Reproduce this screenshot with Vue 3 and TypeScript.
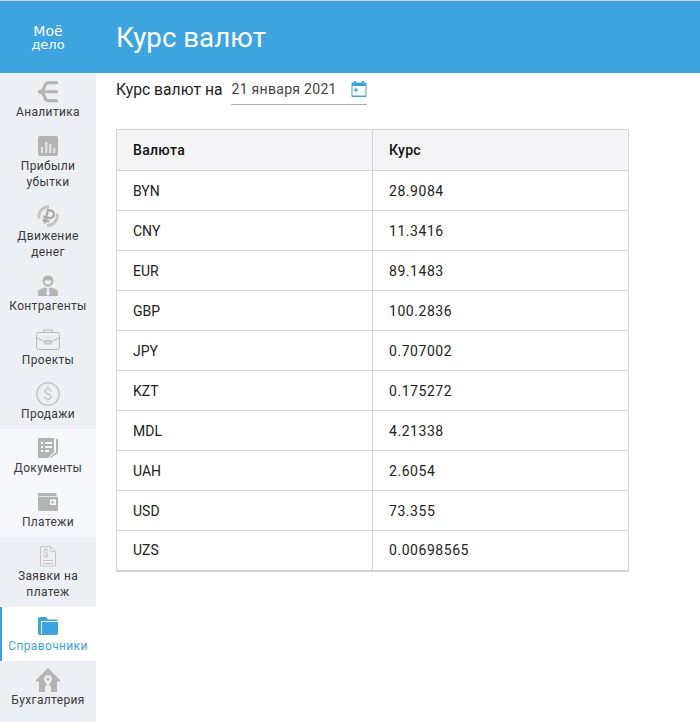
<script setup lang="ts">
interface Nav { id: string; lines: string[]; tone?: string }
const nav: Nav[] = [
  { id: 'analytics', lines: ['Аналитика'] },
  { id: 'profit', lines: ['Прибыли', 'убытки'] },
  { id: 'money', lines: ['Движение', 'денег'] },
  { id: 'agents', lines: ['Контрагенты'] },
  { id: 'projects', lines: ['Проекты'] },
  { id: 'sales', lines: ['Продажи'] },
  { id: 'docs', lines: ['Документы'], tone: 'light' },
  { id: 'pays', lines: ['Платежи'], tone: 'light' },
  { id: 'requests', lines: ['Заявки на', 'платеж'] },
  { id: 'refs', lines: ['Справочники'], tone: 'active' },
  { id: 'accounting', lines: ['Бухгалтерия'] },
]
const rates: [string, string][] = [
  ['BYN', '28.9084'], ['CNY', '11.3416'], ['EUR', '89.1483'], ['GBP', '100.2836'],
  ['JPY', '0.707002'], ['KZT', '0.175272'], ['MDL', '4.21338'], ['UAH', '2.6054'],
  ['USD', '73.355'], ['UZS', '0.00698565'],
]
</script>

<template>
  <div class="page">
    <header class="top">
      <div class="logo"><span class="logo-a">Моё</span><span class="logo-b">дело</span></div>
      <h1 class="title">Курс валют</h1>
    </header>
    <div class="body">
      <nav class="side">
        <a v-for="n in nav" :key="n.id" class="item" :class="n.tone">
          <svg class="ico" width="32" height="24" viewBox="0 0 32 24">
            <g v-if="n.id === 'analytics'" fill="none" stroke="#b3b3b3" stroke-width="3" stroke-linecap="round">
              <path d="M24.500 2.700H17Q13.500 2.700 12.500 6.500Q11.500 11 7.500 11.700" />
              <path d="M24.500 20.700H17Q13.500 20.700 12.500 17Q11.500 12.500 7.500 11.700" />
              <path d="M7.500 11.700H24.500" />
            </g>
            <g v-else-if="n.id === 'profit'">
              <rect x="6" y="2" width="20" height="20" rx="2" fill="#b3b3b3" />
              <path d="M9 13h2v6H9zM13.300 8h2v11h-2zM17.300 10h2v9h-2zM21.300 14h2v5h-2z" fill="#e4e6e8" />
            </g>
            <g v-else-if="n.id === 'money'">
              <path d="M7.200 14.500A9.500 9.500 0 0 1 17 2.700M25 9.500A9.500 9.500 0 0 1 15 21.300" fill="none" stroke="#c4c4c4" stroke-width="3" />
              <g transform="rotate(14 16 12)" fill="none" stroke="#a8a8a8" stroke-width="2.300">
                <path d="M14.500 20V6h3a3.800 3.800 0 0 1 0 7.600h-6M11.500 17h7" />
              </g>
            </g>
            <g v-else-if="n.id === 'agents'">
              <circle cx="16" cy="7" r="4.500" fill="none" stroke="#b3b3b3" stroke-width="2" />
              <path d="M11.500 6.500a4.500 4.500 0 0 1 9 0z" fill="#b3b3b3" />
              <path d="M6 22v-3.500c0-3 3-4.200 7.500-5l2.500 1.500 2.500-1.500c4.500.8 7.500 2 7.500 5V22z" fill="#b3b3b3" />
              <path d="M15 14.500h2l.7 5.500-1.700 2-1.700-2z" fill="#eceff3" />
            </g>
            <g v-else-if="n.id === 'projects'" fill="none" stroke="#b8b8b8" stroke-width="1">
              <rect x="4.500" y="4.500" width="23" height="17" rx="2.500" />
              <path d="M11.500 4.500V2h9v2.500M4.500 9.500l8.500 4.500h6l8.500-4.500M13 12.500h6v3.500h-6z" />
            </g>
            <g v-else-if="n.id === 'sales'">
              <circle cx="16" cy="12" r="11.200" fill="none" stroke="#c6c6c6" stroke-width="1.500" />
              <text x="16" y="18" text-anchor="middle" class="dollar">$</text>
            </g>
            <g v-else-if="n.id === 'docs'">
              <path d="M6 2h16v14l-6 6H6z" fill="#b3b3b3" />
              <path d="M9 6h2v2H9zM13 6h7v2h-7zM9 10h2v2H9zM13 10h7v2h-7zM9 14h2v2H9zM13 14h4v2h-4z" fill="#f5f7fa" />
              <path d="M24 3h2v14l-7 5-1-.8 6-5z" fill="#b3b3b3" />
            </g>
            <g v-else-if="n.id === 'pays'">
              <path d="M8 3h16.500v3H6.500A1.500 1.500 0 0 1 8 3z" fill="#b3b3b3" />
              <path d="M6 5q0 1.800 2 1.800h18V21H8a2 2 0 0 1-2-2z" fill="#b3b3b3" />
              <path d="M18 9.500h6v5.500h-6z" fill="#f5f7fa" />
              <circle cx="20.500" cy="12.200" r="1.300" fill="#b3b3b3" />
            </g>
            <g v-else-if="n.id === 'requests'" fill="none" stroke="#c6c6c6" stroke-width="1">
              <path d="M8.500 2.500h10l5 5v14.500h-15zM18.500 2.500v5h5M11 16.500h10M11 19.500h10" />
              <text x="14" y="13" text-anchor="middle" class="dollar-s">$</text>
            </g>
            <g v-else-if="n.id === 'refs'">
              <path d="M6 5a2 2 0 0 1 2-2h6l2 2.500h8a2 2 0 0 1 2 2V19a2 2 0 0 1-2 2H8a2 2 0 0 1-2-2z" fill="#3da4e0" />
              <path d="M9.500 20V7.500H26" stroke="#fff" stroke-width="1" fill="none" />
            </g>
            <g v-else>
              <path d="M16 0L28 12v1.500h-3V24h-6V20a3 3 0 0 0-6 0v4H7V13.500H4V12z" fill="#b3b3b3" />
              <path d="M16 7a4 4 0 0 1 3.500 6L16 18l-3.500-5A4 4 0 0 1 16 7z" fill="#eceff3" />
              <circle cx="16" cy="11" r="1.500" fill="#b3b3b3" />
            </g>
          </svg>
          <span class="lbl" v-for="l in n.lines" :key="l">{{ l }}</span>
        </a>
      </nav>
      <main class="main">
        <div class="bar">
          <span class="bar-l">Курс валют на</span>
          <div class="date">
            <span>21 января 2021</span>
            <svg class="cal" width="16" height="16" viewBox="0 0 16 16">
              <path d="M3 0h2v1.500h6V0h2v1.500h1.500a1 1 0 0 1 1 1V15a1 1 0 0 1-1 1h-13a1 1 0 0 1-1-1V2.500a1 1 0 0 1 1-1H3z" fill="#3da4e0" />
              <rect x="1.500" y="5" width="13" height="9.500" fill="#fff" />
              <rect x="3.500" y="7.500" width="3" height="3" fill="#3da4e0" />
            </svg>
          </div>
        </div>
        <table class="tbl">
          <thead><tr><th>Валюта</th><th>Курс</th></tr></thead>
          <tbody>
            <tr v-for="r in rates" :key="r[0]"><td>{{ r[0] }}</td><td class="num">{{ r[1] }}</td></tr>
          </tbody>
        </table>
      </main>
    </div>
  </div>
</template>

<style>
html, body { margin: 0; background: #fff; }
</style>

<style scoped>
.page { width: 700px; height: 722px; overflow: hidden; font-family: Roboto, "Liberation Sans", sans-serif; color: #222; display: flex; flex-direction: column; }
.top { height: 72px; border-top: 1px solid #c9d3da; background: #3da4e0; display: flex; align-items: center; color: #fff; flex: none; }
.logo { width: 96px; display: flex; flex-direction: column; align-items: center; font-family: "DejaVu Sans", sans-serif; }
.logo-a { font-size: 14px; line-height: 14px; }
.logo-b { font-size: 13px; line-height: 13px; }
.title { margin: 2px 0 0 20px; font-size: 27.700px; font-weight: 400; line-height: 36px; }
.body { display: flex; flex: 1; min-height: 0; }
.side { width: 96px; flex: none; background: #eceff3; }
.item { display: flex; flex-direction: column; align-items: center; padding-top: 7px; padding-bottom: 7px; box-sizing: border-box; font-size: 12px; line-height: 16px; color: #3a3a3a; letter-spacing: .35px; }
.ico { display: block; height: 24px; }
.item.light { background: #f5f7fa; }
.item.active { background: #fff; color: #3da4e0; box-shadow: inset 2px 0 0 #3da4e0; }
.dollar { font-size: 16px; fill: #c6c6c6; stroke: none; }
.dollar-s { font-size: 10px; fill: #c6c6c6; stroke: none; }
.main { flex: 1; padding-left: 20px; }
.bar { display: flex; align-items: flex-start; height: 56px; }
.bar-l { font-size: 15.700px; line-height: 18px; margin-top: 8px; }
.date { margin-left: 8px; width: 136px; height: 32px; box-sizing: border-box; border-bottom: 1px solid #b0b0b0; display: flex; justify-content: space-between; padding: 7px 0 0 1px; font-size: 14px; line-height: 18px; color: #444; letter-spacing: .3px; }
.cal { margin-top: 1px; }
.tbl { width: 513px; border-collapse: collapse; table-layout: fixed; font-size: 14px; color: #222; border-bottom: 2px solid #d4d4d4; }
.tbl th, .tbl td { border: 1px solid #d4d4d4; height: 40px; padding: 0 16px; box-sizing: border-box; text-align: left; font-weight: 400; }
.tbl .num { letter-spacing: .55px; }
.tbl th { background: #f4f4f6; font-weight: 500; height: 41px; color: #111; letter-spacing: .3px; }
</style>
